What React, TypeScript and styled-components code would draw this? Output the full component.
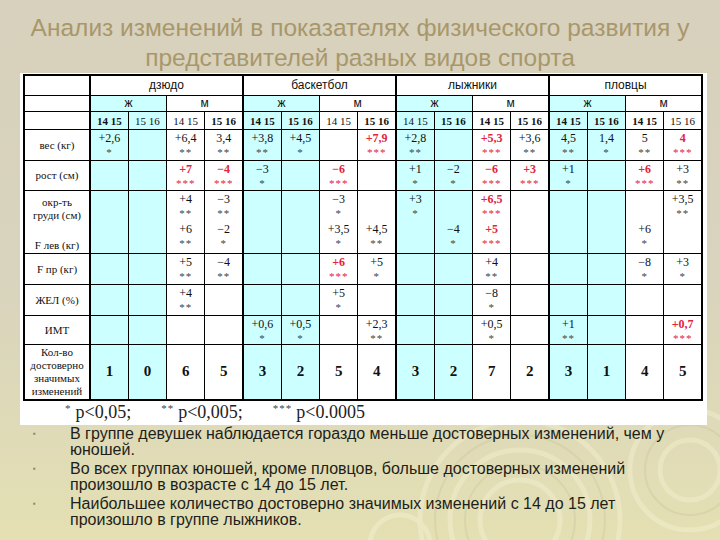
import React from "react";
import styled, { createGlobalStyle } from "styled-components";

const GlobalStyle = createGlobalStyle`
  html, body {
    margin: 0;
    padding: 0;
  }
  body {
    width: 720px;
    height: 540px;
    overflow: hidden;
    font-family: "Liberation Sans", Arial, sans-serif;
  }
`;

const Slide = styled.div`
  position: relative;
  width: 720px;
  height: 540px;
  overflow: hidden;
  background: linear-gradient(180deg, #d7d1bd 0%, #d9d4bc 55%, #e4e0b3 100%);
`;

const Rings = styled.svg`
  position: absolute;
  left: 0;
  top: 0;
  width: 720px;
  height: 540px;
  pointer-events: none;
`;

const Content = styled.div`
  position: relative;
  display: flex;
  flex-direction: column;
`;

const Title = styled.h1`
  margin: 0;
  padding-top: 13px;
  font-weight: normal;
  font-size: 24.5px;
  line-height: 30px;
  text-align: center;
  color: #a8976b;
  font-family: "Liberation Sans", Arial, sans-serif;
`;

const Board = styled.div`
  margin-left: 20px;
  width: 687px;
  background: #ffffff;
  padding: 1px 4px 0 3px;
  box-sizing: border-box;
`;

const Grid = styled.table`
  width: 680px;
  table-layout: fixed;
  border-collapse: collapse;
  border: 2px solid #000;
  font-family: "Liberation Serif", "Times New Roman", serif;
  color: #111;
`;

const cyan = "#ccffff";

const SportTh = styled.th`
  height: 19px;
  padding: 0;
  line-height: 13px;
  border: 1px solid #000;
  border-left: 2px solid #000;
  font-family: "Liberation Sans", Arial, sans-serif;
  font-weight: normal;
  font-size: 12px;
  background: #fff;
`;

const GenderTh = styled.th<{ $f: boolean }>`
  height: 15px;
  padding: 0;
  line-height: 13px;
  border: 1px solid #000;
  border-left: ${(p) => (p.$f ? "2px" : "1px")} solid #000;
  font-family: "Liberation Sans", Arial, sans-serif;
  font-weight: normal;
  font-size: 12px;
  background: ${(p) => (p.$f ? cyan : "#fff")};
`;

const AgeTh = styled.th<{ $f: boolean; $start: boolean; $bold: boolean }>`
  height: 17px;
  padding: 0;
  line-height: 12px;
  border: 1px solid #000;
  border-left: ${(p) => (p.$start ? "2px" : "1px")} solid #000;
  font-size: 11px;
  font-weight: ${(p) => (p.$bold ? "bold" : "normal")};
  background: ${(p) => (p.$f ? cyan : "#fff")};
  white-space: nowrap;
`;

const BlankTh = styled.th`
  border: 1px solid #000;
  border-right: 2px solid #000;
  background: #fff;
  padding: 0;
  line-height: 12px;
`;

const LabelTd = styled.td`
  padding: 0 2px;
  border: 1px solid #000;
  border-right: 2px solid #000;
  text-align: center;
  vertical-align: middle;
  font-size: 11px;
  line-height: 13px;
  background: #fff;
`;

const TwinLabel = styled.div`
  display: flex;
  flex-direction: column;
  justify-content: space-between;
  height: 56px;
  padding-top: 3px;
`;

const DataTd = styled.td<{ $f: boolean; $start: boolean }>`
  padding: 2px 0 0;
  border: 1px solid #000;
  border-left: ${(p) => (p.$start ? "2px" : "1px")} solid #000;
  text-align: center;
  vertical-align: top;
  background: ${(p) => (p.$f ? cyan : "#fff")};
`;

const Half = styled.div`
  height: 30px;
`;

const Value = styled.div<{ $red?: boolean }>`
  font-size: 12px;
  line-height: 13px;
  color: ${(p) => (p.$red ? "#e3223c" : "#111")};
  font-weight: ${(p) => (p.$red ? "bold" : "normal")};
`;

const Stars = styled.div<{ $red?: boolean }>`
  margin-top: 2px;
  font-size: 11px;
  line-height: 11px;
  letter-spacing: 1px;
  color: ${(p) => (p.$red ? "#e3223c" : "#444")};
`;

const CountTd = styled.td<{ $f: boolean; $start: boolean }>`
  padding: 0;
  border: 1px solid #000;
  border-left: ${(p) => (p.$start ? "2px" : "1px")} solid #000;
  text-align: center;
  vertical-align: middle;
  font-size: 15px;
  font-weight: bold;
  background: ${(p) => (p.$f ? cyan : "#fff")};
`;

const Footnote = styled.div`
  display: flex;
  gap: 30px;
  height: 24px;
  align-items: center;
  padding-left: 42px;
  font-family: "Liberation Serif", "Times New Roman", serif;
  font-size: 18px;
  color: #222;
`;

const Mark = styled.span`
  font-size: 11px;
  vertical-align: 6px;
  margin-right: 4px;
  letter-spacing: 1px;
  color: #444;
`;

const Notes = styled.ul`
  list-style: none;
  margin: 1px 0 0;
  padding: 0 40px 0 33px;
  display: flex;
  flex-direction: column;
  gap: 3px;
`;

const Note = styled.li`
  display: flex;
  font-size: 16px;
  line-height: 16px;
  color: #1e1e1a;
`;

const Bullet = styled.span`
  flex: 0 0 37px;
  font-size: 8px;
  line-height: 16px;
  color: #8a8670;
`;

type Item = { v: string; s: string; red: boolean } | null;

const parse = (raw: string): Item => {
  if (!raw) return null;
  const red = raw.startsWith("!");
  const [v, s] = raw.replace("!", "").split("|");
  return { v, s, red };
};

const sports = ["дзюдо", "баскетбол", "лыжники", "пловцы"];
const ageBold = [
  [true, false, false, true],
  [true, true, false, true],
  [false, true, true, true],
  [true, true, true, false],
];

const rows: { label: React.ReactNode; h: number; cells: string[]; twin?: boolean }[] = [
  {
    label: "вес (кг)",
    h: 31,
    cells: ["+2,6|*", "", "+6,4|**", "3,4|**", "+3,8|**", "+4,5|*", "", "!+7,9|***", "+2,8|**", "", "!+5,3|***", "+3,6|**", "4,5|**", "1,4|*", "5|**", "!4|***"],
  },
  {
    label: "рост (см)",
    h: 30,
    cells: ["", "", "!+7|***", "!−4|***", "−3|*", "", "!−6|***", "", "+1|*", "−2|*", "!−6|***", "!+3|***", "+1|*", "", "!+6|***", "+3|**"],
  },
  {
    label: (
      <TwinLabel>
        <span>
          окр-ть
          <br />
          груди (см)
        </span>
        <span>F лев (кг)</span>
      </TwinLabel>
    ),
    h: 63,
    twin: true,
    cells: ["", "", "+4|**;+6|**", "−3|**;−2|*", "", "", "−3|*;+3,5|*", ";+4,5|**", "+3|*;", ";−4|*", "!+6,5|***;!+5|***", "", "", "", ";+6|*", "+3,5|**;"],
  },
  {
    label: "F пр (кг)",
    h: 31,
    cells: ["", "", "+5|**", "−4|**", "", "", "!+6|***", "+5|*", "", "", "+4|**", "", "", "", "−8|*", "+3|*"],
  },
  {
    label: "ЖЕЛ (%)",
    h: 31,
    cells: ["", "", "+4|**", "", "", "", "+5|*", "", "", "", "−8|*", "", "", "", "", ""],
  },
  {
    label: "ИМТ",
    h: 28,
    cells: ["", "", "", "", "+0,6|*", "+0,5|*", "", "+2,3|**", "", "", "+0,5|*", "", "+1|**", "", "", "!+0,7|***"],
  },
];

const counts = [1, 0, 6, 5, 3, 2, 5, 4, 3, 2, 7, 2, 3, 1, 4, 5];

const Entry = ({ item }: { item: Item }) =>
  item ? (
    <>
      <Value $red={item.red}>{item.v}</Value>
      <Stars $red={item.red}>{item.s}</Stars>
    </>
  ) : null;

const isF = (i: number) => i % 4 < 2;
const isStart = (i: number) => i % 4 === 0;

export default function App() {
  return (
    <>
      <GlobalStyle />
      <Slide>
        <Rings viewBox="0 0 720 540">
          <g fill="none" stroke="#f4f1d2" strokeWidth="5" opacity="0.45">
            <circle cx="520" cy="520" r="40" />
            <circle cx="520" cy="520" r="70" />
            <circle cx="520" cy="520" r="100" />
            <circle cx="690" cy="470" r="30" />
            <circle cx="690" cy="470" r="60" />
            <circle cx="400" cy="545" r="30" />
          </g>
          <g fill="none" stroke="#c9c49a" strokeWidth="2" opacity="0.35">
            <circle cx="520" cy="520" r="55" />
            <circle cx="520" cy="520" r="85" />
            <circle cx="690" cy="470" r="45" />
          </g>
        </Rings>
        <Content>
          <Title>
            Анализ изменений в показателях физического развития у
            <br />
            представителей разных видов спорта
          </Title>
          <Board>
            <Grid>
              <colgroup>
                <col style={{ width: 66 }} />
                {counts.map((_, i) => (
                  <col key={i} />
                ))}
              </colgroup>
              <thead>
                <tr>
                  <BlankTh />
                  {sports.map((s) => (
                    <SportTh key={s} colSpan={4}>
                      {s}
                    </SportTh>
                  ))}
                </tr>
                <tr>
                  <BlankTh />
                  {sports.map((s) => (
                    <React.Fragment key={s}>
                      <GenderTh $f colSpan={2}>
                        ж
                      </GenderTh>
                      <GenderTh $f={false} colSpan={2}>
                        м
                      </GenderTh>
                    </React.Fragment>
                  ))}
                </tr>
                <tr>
                  <BlankTh />
                  {counts.map((_, i) => (
                    <AgeTh key={i} $f={isF(i)} $start={isStart(i)} $bold={ageBold[Math.floor(i / 4)][i % 4]}>
                      {i % 2 === 0 ? "14 15" : "15 16"}
                    </AgeTh>
                  ))}
                </tr>
              </thead>
              <tbody>
                {rows.map((row, r) => (
                  <tr key={r} style={{ height: row.h }}>
                    <LabelTd>{row.label}</LabelTd>
                    {row.cells.map((c, i) => (
                      <DataTd key={i} $f={isF(i)} $start={isStart(i)}>
                        {row.twin ? (
                          c.split(";").map((part, k) => (
                            <Half key={k}>
                              <Entry item={parse(part)} />
                            </Half>
                          ))
                        ) : (
                          <Entry item={parse(c)} />
                        )}
                      </DataTd>
                    ))}
                  </tr>
                ))}
                <tr style={{ height: 55 }}>
                  <LabelTd>
                    Кол-во
                    <br />
                    достоверно
                    <br />
                    значимых
                    <br />
                    изменений
                  </LabelTd>
                  {counts.map((n, i) => (
                    <CountTd key={i} $f={isF(i)} $start={isStart(i)}>
                      {n}
                    </CountTd>
                  ))}
                </tr>
              </tbody>
            </Grid>
            <Footnote>
              <span>
                <Mark>*</Mark>p&lt;0,05;
              </span>
              <span>
                <Mark>**</Mark>p&lt;0,005;
              </span>
              <span>
                <Mark>***</Mark>p&lt;0.0005
              </span>
            </Footnote>
          </Board>
          <Notes>
            <Note>
              <Bullet>▪</Bullet>
              <span>В группе девушек наблюдается гораздо меньше достоверных изменений, чем у юношей.</span>
            </Note>
            <Note>
              <Bullet>▪</Bullet>
              <span>Во всех группах юношей, кроме пловцов, больше достоверных изменений произошло в возрасте с 14 до 15 лет.</span>
            </Note>
            <Note>
              <Bullet>▪</Bullet>
              <span>Наибольшее количество достоверно значимых изменений с 14 до 15 лет произошло в группе лыжников.</span>
            </Note>
          </Notes>
        </Content>
      </Slide>
    </>
  );
}
